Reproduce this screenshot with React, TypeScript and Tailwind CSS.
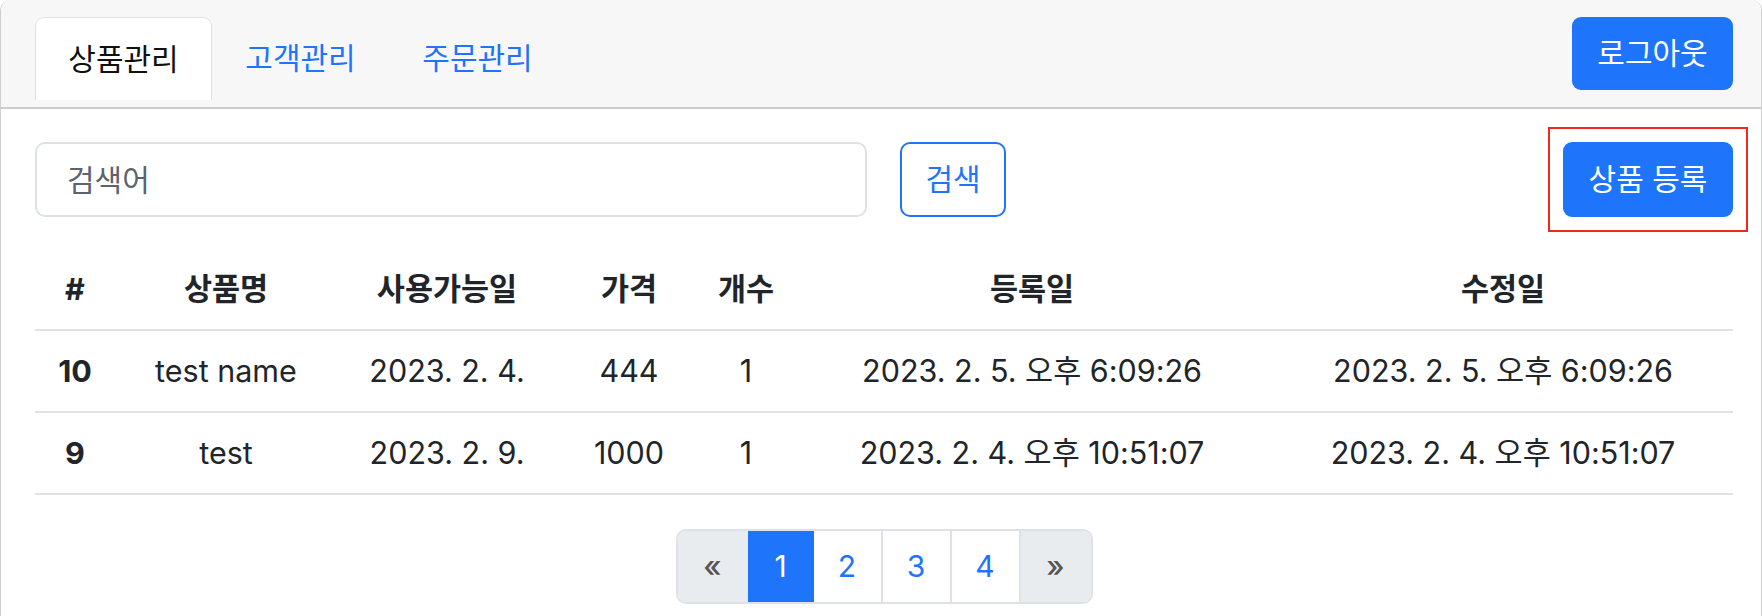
import { useState } from 'react'

type Product = {
  id: number
  name: string
  availableAt: string
  price: number
  count: number
  createdAt: string
  updatedAt: string
}

const products: Product[] = [
  {
    id: 10,
    name: 'test name',
    availableAt: '2023. 2. 4.',
    price: 444,
    count: 1,
    createdAt: '2023. 2. 5. 오후 6:09:26',
    updatedAt: '2023. 2. 5. 오후 6:09:26',
  },
  {
    id: 9,
    name: 'test',
    availableAt: '2023. 2. 9.',
    price: 1000,
    count: 1,
    createdAt: '2023. 2. 4. 오후 10:51:07',
    updatedAt: '2023. 2. 4. 오후 10:51:07',
  },
]

const tabs = ['상품관리', '고객관리', '주문관리']
const columns = ['#', '상품명', '사용가능일', '가격', '개수', '등록일', '수정일']

export default function App() {
  const [activeTab, setActiveTab] = useState(0)
  const [query, setQuery] = useState('')

  return (
    <div className="min-h-[616px] bg-white font-['Inter','Noto_Sans_CJK_KR',sans-serif] text-[#212529]">
      <div className="min-h-[616px] rounded-t-[10px] border-x border-[#d0d0d0]">
        {/* header with tabs */}
        <div className="flex h-[109px] items-start justify-between rounded-t-[10px] border-b-2 border-[#cbcbcb] bg-[#f7f7f7] pl-[34px] pr-[28px]">
          <nav className="mt-[17px] flex">
            {tabs.map((tab, i) => (
              <button
                key={tab}
                onClick={() => setActiveTab(i)}
                className={
                  i === activeTab
                    ? 'flex h-[83px] w-[177px] items-center justify-center rounded-t-[9px] border border-b-0 border-[#dee2e6] bg-white text-[30px] text-[#111]'
                    : 'flex h-[83px] w-[177px] items-center justify-center border border-transparent text-[30px] text-[#1e74fb]'
                }
              >
                {tab}
              </button>
            ))}
          </nav>
          <button className="mt-[17px] h-[73px] w-[161px] rounded-[9px] bg-[#1e74fb] text-[30px] text-white">
            로그아웃
          </button>
        </div>

        <div className="pl-[34px] pr-[28px] pt-[33px]">
          {/* search row */}
          <div className="flex items-center">
            <input
              value={query}
              onChange={(e) => setQuery(e.target.value)}
              placeholder="검색어"
              className="h-[75px] w-[832px] rounded-[10px] border-2 border-[#dee2e6] px-[30px] text-[30px] text-[#212529] outline-none placeholder:text-[#5c636a]"
            />
            <button className="ml-[33px] h-[75px] w-[106px] rounded-[10px] border-2 border-[#1e74fb] text-[30px] text-[#1e74fb]">
              검색
            </button>
            <div className="relative ml-auto">
              <button className="h-[75px] w-[170px] rounded-[9px] bg-[#1e74fb] text-[30px] text-white">
                상품 등록
              </button>
              {/* highlight box drawn over the button */}
              <span className="pointer-events-none absolute -inset-[15px] border-2 border-[#f0281e]" />
            </div>
          </div>

          {/* product table */}
          <table className="mt-[31px] w-full table-fixed border-collapse text-center text-[30.5px]">
            <colgroup>
              <col className="w-[80px]" />
              <col className="w-[222px]" />
              <col className="w-[220px]" />
              <col className="w-[144px]" />
              <col className="w-[90px]" />
              <col className="w-[482px]" />
              <col />
            </colgroup>
            <thead>
              <tr className="h-[82px] border-b-2 border-[#dee2e6]">
                {columns.map((col) => (
                  <th key={col} className="font-bold">
                    {col}
                  </th>
                ))}
              </tr>
            </thead>
            <tbody>
              {products.map((p) => (
                <tr key={p.id} className="h-[82px] border-b-2 border-[#dee2e6]">
                  <td className="font-bold">{p.id}</td>
                  <td>{p.name}</td>
                  <td>{p.availableAt}</td>
                  <td>{p.price}</td>
                  <td>{p.count}</td>
                  <td>{p.createdAt}</td>
                  <td>{p.updatedAt}</td>
                </tr>
              ))}
            </tbody>
          </table>

          {/* pagination */}
          <div className="mt-[34px] flex justify-center">
            <div className="flex h-[75px] overflow-hidden rounded-[10px] border-2 border-[#dee2e6] text-[30px]">
              <span className="flex w-[70px] items-center justify-center bg-[#e9ecef] font-medium text-[#555]">
                «
              </span>
              <span className="flex w-[66px] items-center justify-center bg-[#1e74fb] text-white">
                1
              </span>
              {[2, 3, 4].map((n) => (
                <span
                  key={n}
                  className="flex w-[69px] items-center justify-center border-r-2 border-[#dee2e6] bg-white text-[#1e74fb] last:border-r-0"
                >
                  {n}
                </span>
              ))}
              <span className="flex w-[70px] items-center justify-center bg-[#e9ecef] font-medium text-[#555]">
                »
              </span>
            </div>
          </div>
        </div>
      </div>
    </div>
  )
}
